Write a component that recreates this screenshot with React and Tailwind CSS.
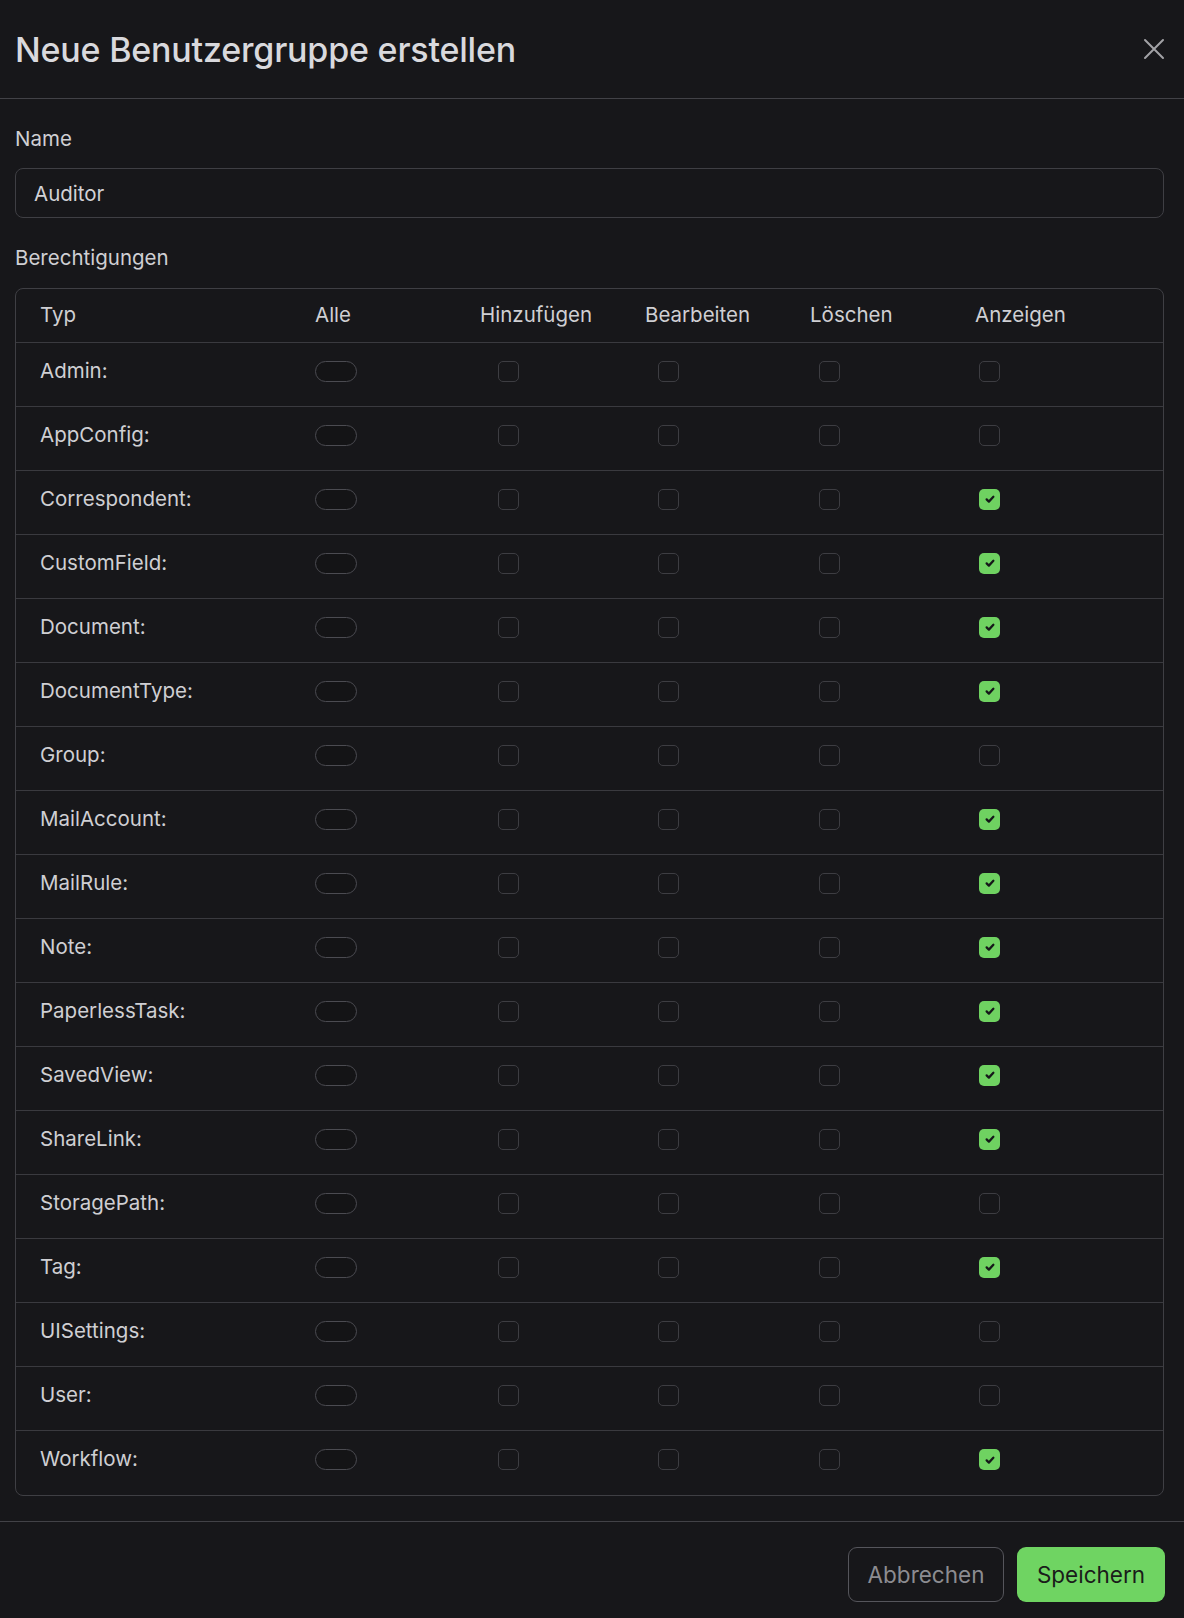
import { useState } from 'react'

const TYPES = [
  ['Admin', false],
  ['AppConfig', false],
  ['Correspondent', true],
  ['CustomField', true],
  ['Document', true],
  ['DocumentType', true],
  ['Group', false],
  ['MailAccount', true],
  ['MailRule', true],
  ['Note', true],
  ['PaperlessTask', true],
  ['SavedView', true],
  ['ShareLink', true],
  ['StoragePath', false],
  ['Tag', true],
  ['UISettings', false],
  ['User', false],
  ['Workflow', true],
]

function Check({ checked }) {
  if (checked) {
    return (
      <div className="w-[21px] h-[21px] rounded-[5px] bg-[#6fd261] flex items-center justify-center">
        <svg width="12" height="12" viewBox="0 0 16 16" fill="none">
          <path d="M3.5 8.5l3 3L12.5 5" stroke="#16181a" strokeWidth="3" strokeLinecap="round" strokeLinejoin="round" />
        </svg>
      </div>
    )
  }
  return <div className="w-[21px] h-[21px] rounded-[5px] border border-[#3d3d42]" />
}

function Toggle() {
  return <div className="w-[42px] h-[21px] rounded-full border border-[#4b4b51] bg-[#141416]" />
}

function PermRow({ name, view, last }) {
  return (
    <div className={`h-[64px] flex items-center pl-[24px] pb-[7px] ${last ? '' : 'border-b border-[#3a3a3f]'}`}>
      <div className="w-[275px] text-[20.5px] text-[#cfcfd3]">{name}:</div>
      <div className="w-[182.5px]"><Toggle /></div>
      <div className="w-[160.5px]"><Check /></div>
      <div className="w-[160.5px]"><Check /></div>
      <div className="w-[160.5px]"><Check /></div>
      <div className="w-[160.5px]"><Check checked={view} /></div>
    </div>
  )
}

export default function App() {
  const [name, setName] = useState('Auditor')
  return (
    <div className="min-h-[1618px] bg-[#17171a] text-[#d2d2d6] font-['Inter','Noto_Sans',sans-serif]">
      <div className="h-[99px] border-b border-[#424247] pl-[15px] pr-[19px] flex items-center justify-between">
        <div className="text-[34px] text-[#d9d9dd] font-medium tracking-[-0.2px]">Neue Benutzergruppe erstellen</div>
        <button className="w-[22px] h-[22px] flex items-center justify-center">
          <svg width="22" height="22" viewBox="0 0 22 22" fill="none">
            <path d="M2 2l18 18M20 2L2 20" stroke="#a2a2a6" strokeWidth="2" strokeLinecap="round" />
          </svg>
        </button>
      </div>

      <div className="pl-[15px] pr-[20px] pt-[25px] pb-[25px]">
        <div className="text-[20.5px] leading-[30px] text-[#cfcfd3]">Name</div>
        <input
          value={name}
          onChange={(e)=>setName(e.target.value)}
          className="mt-[14px] w-full h-[50px] rounded-[8px] border border-[#3f3f44] bg-[#17171a] px-[18px] text-[20.5px] text-[#d2d2d6] outline-none"
        />
        <div className="mt-[25px] text-[20.5px] leading-[30px] text-[#cfcfd3]">Berechtigungen</div>
        <div className="mt-[15px] border border-[#3f3f44] rounded-[8px]">
          <div className="h-[54px] flex items-center pl-[24px] border-b border-[#3a3a3f] text-[20.5px] text-[#cfcfd3]">
            <div className="w-[275px]">Typ</div>
            <div className="w-[165px]">Alle</div>
            <div className="w-[165px]">Hinzufügen</div>
            <div className="w-[165px]">Bearbeiten</div>
            <div className="w-[165px]">Löschen</div>
            <div className="w-[165px]">Anzeigen</div>
          </div>
          {TYPES.map(([t, v], i) => (
            <PermRow key={t} name={t} view={v} last={i === TYPES.length - 1} />
          ))}
        </div>
      </div>

      <div className="border-t border-[#424247] pt-[25px] pr-[19px] flex justify-end gap-[13px]">
        <button className="w-[156px] h-[55px] rounded-[9px] border border-[#55555b] text-[22.5px] text-[#8c8c91]">Abbrechen</button>
        <button className="w-[148px] h-[55px] rounded-[9px] bg-[#6fd462] text-[22.5px] text-[#1a1c1a]">Speichern</button>
      </div>
    </div>
  )
}
